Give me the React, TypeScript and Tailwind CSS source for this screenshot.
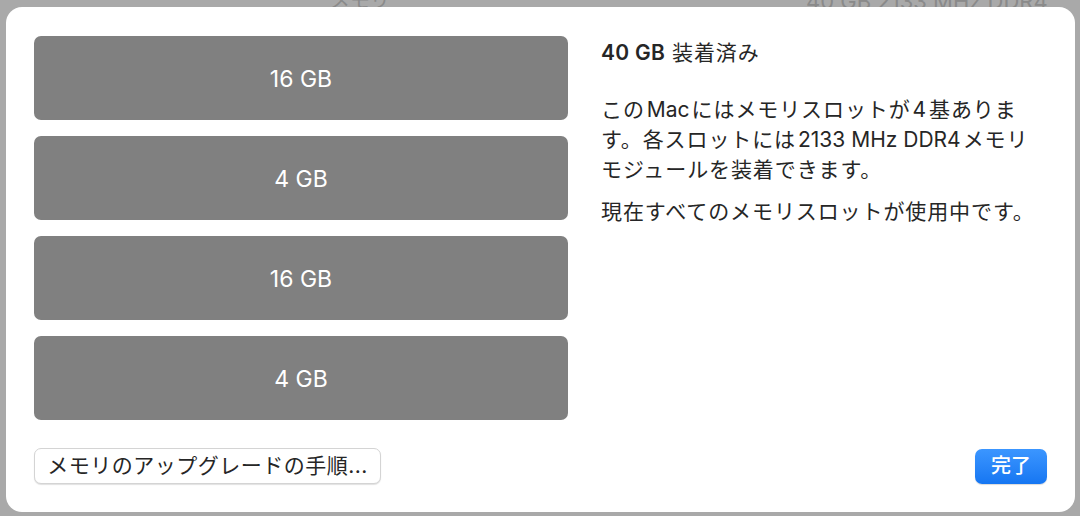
const SLOTS = ['16 GB', '4 GB', '16 GB', '4 GB']

export default function App() {
  return (
    <div
      className="relative h-[516px] w-[1080px] overflow-hidden bg-[#a9a9a9] pt-[7px] pl-[6px]"
      style={{ fontFamily: 'Inter, "Noto Sans CJK JP", sans-serif' }}
    >
      {/* dimmed window behind the sheet */}
      <span className="absolute left-[330px] top-[-14px] text-[20px] text-[#8a8a8a]">メモリ</span>
      <span className="absolute left-[806px] top-[-15px] text-[22px] text-[#8a8a8a]">40 GB 2133 MHz DDR4</span>

      <div className="relative flex h-[505px] w-[1069px] flex-col rounded-[16px] bg-white px-[28px] pt-[29px] pb-[28px] text-[#262626]">
        <div className="flex gap-[33px]">
          <div className="flex w-[534px] flex-col gap-[16px]">
            {SLOTS.map((s, i) => (
              <div key={i} className="flex h-[84px] items-center justify-center rounded-[7px] bg-[#808080] pt-[2px] text-[23px] text-white">
                {s}
              </div>
            ))}
          </div>

          <div className="flex flex-col pt-[2px] text-[21px] leading-[30px] tracking-[0.9px]">
            <p className="whitespace-nowrap">
              <span className="font-semibold tracking-[0.3px]">40 GB</span> 装着済み
            </p>
            <p className="mt-[27px] whitespace-nowrap">
              この<span className="mx-[2px] tracking-normal">Mac</span>にはメモリスロットが<span className="mx-[2px]">4</span>基ありま
              <br />
              す。各スロットには<span className="mx-[2px] tracking-normal">2133 MHz DDR4</span>メモリ
              <br />
              モジュールを装着できます。
            </p>
            <p className="mt-[12px] whitespace-nowrap">現在すべてのメモリスロットが使用中です。</p>
          </div>
        </div>

        <div className="mt-auto flex items-center justify-between">
          <button className="h-[36px] w-[347px] rounded-[7px] border border-[#d4d4d4] bg-white text-[21px] tracking-[0.5px] text-[#262626] shadow-[0_1px_1px_rgba(0,0,0,0.12)]">
            メモリのアップグレードの手順...
          </button>
          <button className="h-[35px] w-[72px] rounded-[7px] bg-gradient-to-b from-[#3b96ff] to-[#1576f2] text-[20px] font-medium text-white shadow-[0_1px_1px_rgba(0,0,0,0.15)]">
            完了
          </button>
        </div>
      </div>
    </div>
  )
}
